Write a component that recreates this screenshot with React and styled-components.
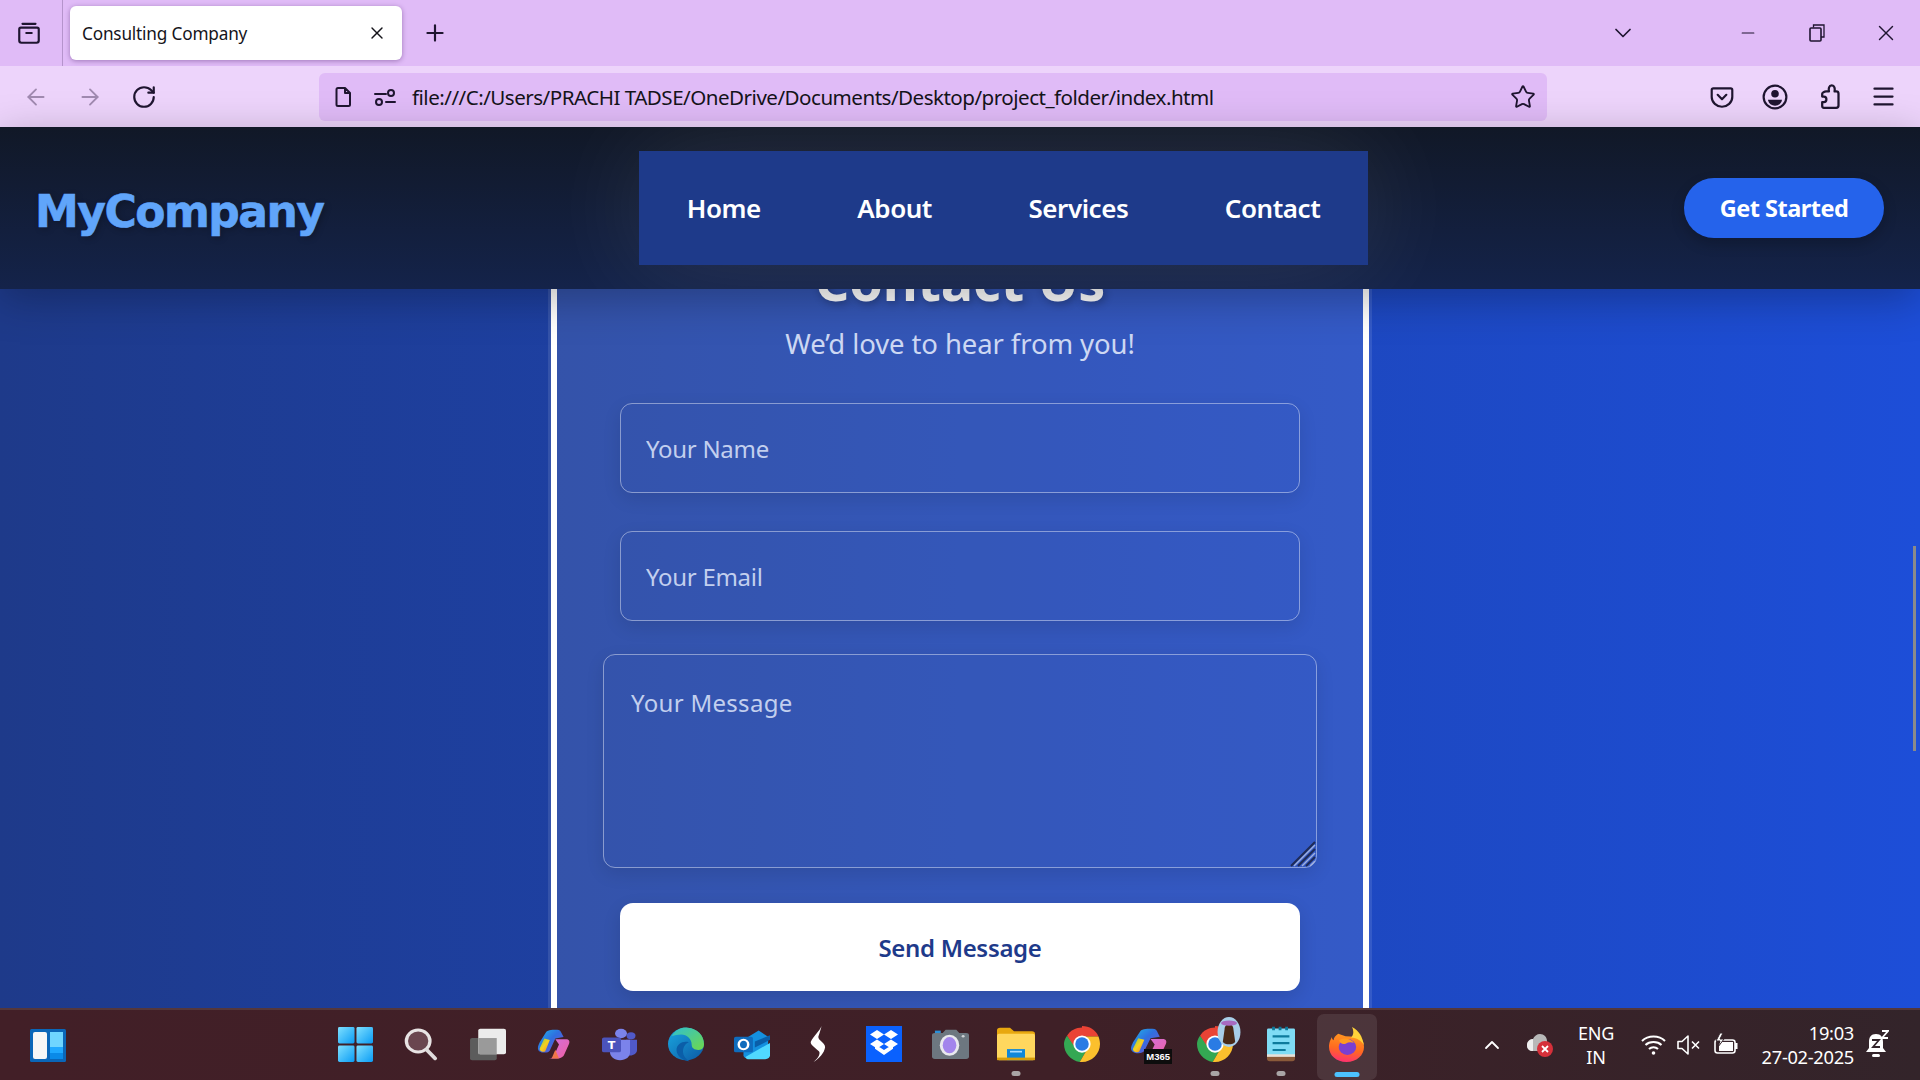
import React from "react";
import styled, { createGlobalStyle } from "styled-components";
import { ArrowLeft, ArrowRight, RotateCw, Star, X, Plus, ChevronDown, ChevronUp, Minus, Menu } from "lucide-react";

const Global = createGlobalStyle`
  html, body { margin: 0; padding: 0; height: 100%; overflow: hidden; }
  * { box-sizing: border-box; }
  body { font-family: "Noto Sans", "Open Sans", sans-serif; }
`;

const Screen = styled.div`
  width: 1920px; height: 1080px; display: flex; flex-direction: column; overflow: hidden; position: relative;
`;
const TabStrip = styled.div`
  height: 66px; background: #e0bbf7; display: flex; align-items: center; color: #1f1530; flex: none;
`;
const TabGroupButton = styled.div`
  width: 63px; height: 66px; border-right: 1px solid #b594cc; display: flex; align-items: center; justify-content: center; padding-right: 4px;
`;
const Tab = styled.div`
  width: 332px; height: 54px; margin-left: 7px; background: #fff; border-radius: 6px; box-shadow: 0 1px 5px rgba(60,20,90,.4);
  display: flex; align-items: center; justify-content: space-between; padding: 0 15px 0 12px; font-size: 17.2px; letter-spacing: -.18px; color: #15141a;
`;
const NewTab = styled.div`
  margin-left: 20px; display: flex; align-items: center;
`;
const Spacer = styled.div` flex: 1; `;
const WindowButtons = styled.div`
  display: flex; align-items: center;
`;
const WindowButton = styled.div`
  width: 69px; height: 66px; display: flex; align-items: center; justify-content: center; flex: none;
  margin-right: ${p => p.$after || 0}px;
`;
const ToolBar = styled.div`
  height: 61px; background: #edd4fb; display: flex; align-items: center; flex: none; color: #1f1530; position: relative;
`;
const NavButtons = styled.div`
  width: 319px; display: flex; align-items: center; gap: 28px; padding-left: 23px;
`;
const UrlBar = styled.div`
  width: 1228px; height: 48px; background: #e0bbf7; border-radius: 6px; display: flex; align-items: center; padding: 0 11px 0 12px;
`;
const PermGap = styled.span` width: 18px; flex: none; `;
const UrlText = styled.div`
  margin-left: 15px; font-size: 20.6px; letter-spacing: -.52px; color: #15141a; flex: 1; white-space: nowrap;
`;
const ToolActions = styled.div`
  flex: 1; display: flex; align-items: center; justify-content: flex-end; gap: 27.5px; padding-right: 23px;
`;
const Viewport = styled.div`
  flex: 1; min-height: 0; display: flex; flex-direction: column; position: relative;
  background: linear-gradient(to right, #1e3a8a, #1d4ed8);
`;
const SiteHeader = styled.header`
  height: 162px; flex: none; display: flex; align-items: center; justify-content: space-between; position: relative; z-index: 2; overflow: hidden;
  padding: 0 36px 0 35px;
  background: linear-gradient(to bottom, #111827, #14234a);
  box-shadow: 0 10px 40px rgba(0,0,0,.27);
`;
const Logo = styled.div`
  font-family: "DejaVu Sans", sans-serif; font-weight: 700; font-size: 44px; letter-spacing: -1.5px; color: #60a5fa; width: 322px; text-shadow: 2px 2px 6px rgba(0,0,0,.25); margin-top: 6px;
  -webkit-text-stroke: .6px #60a5fa;
`;
const Nav = styled.nav`
  width: 729px; height: 114px; background: #1e3a8a; display: flex; align-items: center; justify-content: center; gap: 96.5px; margin-left: 282px;
  box-shadow: 0 0 110px rgba(255,255,255,.1);
`;
const NavLink = styled.a`
  color: #fff; font-size: 26px; font-weight: 600; letter-spacing: -.45px; white-space: nowrap;
`;
const Cta = styled.button`
  width: 200px; height: 60px; border: 0; border-radius: 30px; background: #2563eb; color: #fff; font: 700 23.5px "Noto Sans", sans-serif; letter-spacing: -.5px;
  box-shadow: 0 6px 14px rgba(0,0,0,.2); margin-left: auto; padding: 0;
`;
const Main = styled.main`
  flex: 1; min-height: 0; overflow: hidden; display: flex; justify-content: center; padding-left: 0;
`;
const Card = styled.section`
  width: 818px; height: 900px; margin-top: -72px; flex: none; border: 6px solid #fff; background: rgba(255,255,255,.1); padding-top: 25px;
  box-shadow: 0 0 0 3px rgba(255,255,255,.1); display: flex; flex-direction: column; align-items: center; color: #fff;
`;
const Title = styled.h2`
  margin: 0; font-size: 54px; line-height: 64px; font-weight: 700; letter-spacing: -.2px; text-shadow: 2px 2px 8px rgba(0,0,0,.3);
`;
const Subtitle = styled.p`
  margin: 12px 0 39px; font-size: 27.5px; line-height: 40px; letter-spacing: -.1px; color: #cdd8f3; 
`;
const Input = styled.input`
  width: 680px; height: 90px; flex: none; margin-bottom: ${p => p.$gap}px; border: 1px solid rgba(255,255,255,.42); border-radius: 12px; background: transparent;
  padding: 1px 25px 0; font: 24px "Noto Sans", sans-serif; letter-spacing: -.3px; color: #fff; outline: none; box-shadow: 0 6px 18px rgba(0,0,0,.1);
  &::placeholder { color: #c2cfee; opacity: 1; }
`;
const AreaWrap = styled.div`
  position: relative; width: 714px; height: 214px; flex: none; margin-bottom: 35px;
`;
const TextArea = styled.textarea`
  width: 100%; height: 100%; display: block; resize: none; border: 1px solid rgba(255,255,255,.42); border-radius: 12px; background: transparent;
  padding: 34px 27px; font: 24px/1.15 "Noto Sans", sans-serif; letter-spacing: .3px; color: #fff; outline: none; box-shadow: 0 6px 18px rgba(0,0,0,.1);
  &::placeholder { color: #c2cfee; opacity: 1; }
`;
const Grip = styled.svg`
  position: absolute; right: 1px; bottom: 1px;
`;
const Send = styled.button`
  width: 680px; height: 88px; flex: none; border: 0; border-radius: 13px; background: #fff; color: #1e3a8a; font: 600 24px "Noto Sans", sans-serif; letter-spacing: -.32px; box-shadow: 0 6px 18px rgba(0,0,0,.12); padding: 0;
`;
const Scrollbar = styled.div`
  position: absolute; top: 419px; right: 4px; width: 3px; height: 205px; background: #8a8a8a; z-index: 5;
`;
const Taskbar = styled.footer`
  height: 72px; flex: none; border-top: 2px solid #54373b; display: flex; align-items: center; color: #fff;
  background: linear-gradient(to right, #421f27, #3f2027 55%, #33242a); position: relative; z-index: 3;
`;
const Widgets = styled.div`
  width: 322px; flex: none; padding-left: 30px; display: flex; align-items: center;
`;
const Apps = styled.div` display: flex; align-items: center; flex: none; `;
const AppSlot = styled.div`
  width: 66.13px; height: 70px; display: flex; align-items: center; justify-content: center; position: relative; flex: none;
  ${p => p.$active && `&::before { content: ""; position: absolute; left: 3px; right: 3px; top: 4px; bottom: 0; background: rgba(255,255,255,.09); border-radius: 7px; }`}
  & > svg, & > div { position: relative; margin-bottom: 2px; }
`;
const Dot = styled.span`
  position: absolute; bottom: 4px; left: 50%; transform: translateX(-50%); width: 9px; height: 5px; border-radius: 3px; background: #a9a5a6;
`;
const ActiveDot = styled.span`
  position: absolute; bottom: 3px; left: 50%; transform: translateX(-50%); width: 25px; height: 5px; border-radius: 3px; background: #4cc2ff;
`;
const Tray = styled.div`
  flex: 1; display: flex; align-items: center; padding-left: 100px; 
`;
const ChevronGap = styled.span` width: 22px; flex: none; `;
const Lang = styled.div`
  width: 50px; margin-left: 17px; text-align: center; font-size: 18px; line-height: 24px; letter-spacing: -.2px; 
`;
const TrayGroup = styled.div`
  display: flex; align-items: center; gap: 11px; margin-left: 20px;
`;
const Clock = styled.div`
  margin-left: 21px; width: 94px; flex: none; text-align: right; font-size: 18.3px; line-height: 24px; letter-spacing: -.3px; white-space: nowrap;
`;
const Bell = styled.div` margin-left: 11px; display: flex; `;
const Badged = styled.div` position: relative; display: flex; `;

const Ic = ({ s = 24, children, vb = "0 0 24 24" }) => <svg width={s} height={s} viewBox={vb} fill="none">{children}</svg>;
const App36 = ({ w, h, vb, children }) => <svg width={w} height={h} viewBox={vb} preserveAspectRatio="none">{children}</svg>;

const Archive = () => <Ic s={26}><path d="M6 3.500h12M4.500 7h15c1 0 1.500.6 1.500 1.500v10.500c0 1-.6 2-2 2H5c-1.400 0-2-1-2-2V8.500C3 7.600 3.500 7 4.500 7zM9.500 12h5" stroke="#1f1530" strokeWidth="2" strokeLinecap="round" /></Ic>;
const FileIc = () => <Ic s={24}><path d="M7 3h7l5 5v11.500c0 1-.7 1.500-1.500 1.500h-10.500c-1 0-1.500-.6-1.500-1.500V4.500C5.500 3.600 6 3 7 3zM14 3v5h5" stroke="#1f1530" strokeWidth="2" strokeLinejoin="round" fill="none" /></Ic>;
const Perm = () => <Ic s={24}><path d="M2 9h11M13 17h9" stroke="#1f1530" strokeWidth="2" strokeLinecap="round" /><circle cx="18" cy="8" r="3" stroke="#1f1530" strokeWidth="2" /><circle cx="6" cy="17" r="3" stroke="#1f1530" strokeWidth="2" /></Ic>;
const Pocket = () => <Ic s={26}><path d="M4 4h16c1 0 1.500.6 1.500 1.500V12c0 5-4.500 9-9.500 9s-9.500-4-9.500-9V5.500C2.500 4.600 3 4 4 4z" stroke="#1f1530" strokeWidth="2" /><path d="M8 10l4 4 4-4" stroke="#1f1530" strokeWidth="2" strokeLinecap="round" strokeLinejoin="round" /></Ic>;
const Account = () => <Ic s={26}><circle cx="12" cy="12" r="10.500" stroke="#1f1530" strokeWidth="2" /><circle cx="12" cy="9" r="3.500" fill="#1f1530" /><path d="M5.500 14.500h13c-.5 3.500-3.500 5.500-6.500 5.500s-6-2-6.500-5.500z" fill="#1f1530" /></Ic>;
const Jigsaw = () => <Ic s={27}><path d="M9 7.500h2.500C11 5 11.500 2 14 2c2.500 0 3 3 2.500 5.500H18c1 0 2 .8 2 2V20c0 1-.8 2-2 2H7c-1 0-1.500-.7-1.500-1.500V17H7c3 0 3-5 0-5H5.500V9.500C5.500 8.500 7.500 7.500 9 7.500z" stroke="#1f1530" strokeWidth="2" strokeLinejoin="round" /></Ic>;
const Restore = () => <svg width="16" height="18" viewBox="0 0 16 18" fill="none"><path d="M4.500 3.500V1h10.500v12h-3" stroke="#1f1530" strokeWidth="1.300" /><rect x="1" y="4" width="11" height="13" rx="1" stroke="#1f1530" strokeWidth="1.600" /></svg>;

const StartI = () => <svg width="35" height="35" viewBox="0 0 36 36"><defs><linearGradient id="w" x1="0" y1="0" x2="1" y2="1"><stop offset="0" stopColor="#7fe0ff" /><stop offset="1" stopColor="#0a9cf5" /></linearGradient></defs><rect x="0" y="0" width="17" height="17" rx="1.500" fill="url(#w)" /><rect x="19" y="0" width="17" height="17" rx="1.500" fill="url(#w)" /><rect x="0" y="19" width="17" height="17" rx="1.500" fill="url(#w)" /><rect x="19" y="19" width="17" height="17" rx="1.500" fill="url(#w)" /></svg>;
const SearchI = () => <App36 w={34} h={35} vb="0 0 36 40"><circle cx="15" cy="16" r="12.500" fill="#6a464f" stroke="#e8e4e4" strokeWidth="3.500" /><path d="M24 26l9 10" stroke="#e0dcdc" strokeWidth="4" strokeLinecap="round" /></App36>;
const TaskViewI = () => <App36 w={37} h={34} vb="0 0 36 40"><rect x="1" y="13" width="26" height="26" rx="2" fill="#5c5c5c" /><rect x="9" y="2" width="27" height="30" rx="2" fill="#ececec" /><rect x="9" y="13" width="18" height="19" fill="#9a9a9a" /></App36>;
const Copilot = ({ m, w = 33, h = 31 }) => {
  const k = m ? "m" : "d";
  return <App36 w={w} h={h} vb="0 0 36 42"><defs><linearGradient id={`c1${k}`} x1="0" y1="0" x2="1" y2="1"><stop offset="0" stopColor="#1fb6e8" /><stop offset=".45" stopColor="#2f6fe0" /><stop offset="1" stopColor="#7b4fd0" /></linearGradient><linearGradient id={`c2${k}`} x1="0" y1="0" x2="1" y2="1"><stop offset="0" stopColor="#7fd04a" /><stop offset=".5" stopColor="#f5d020" /><stop offset="1" stopColor="#f08030" /></linearGradient><linearGradient id={`c3${k}`} x1="0" y1="0" x2="1" y2="1"><stop offset="0" stopColor="#d070e0" /><stop offset="1" stopColor="#f060a0" /></linearGradient></defs><path d="M10 4c2-3 8-3 12-3 3 0 4 2 5 5l2 5-9 2-6 16c-1 2-3 3-6 3-4 0-7-2-7-6 0-3 1-5 2-8z" fill={`url(#c1${k})`} /><path d="M3 26l5-13 6 2-5 15c-2 2-7 0-6-4z" fill={`url(#c2${k})`} /><path d="M20 14h12c3 0 4 3 3 6l-5 14c-1 4-4 6-8 6h-9c3 0 5-2 6-5l5-14z" fill={`url(#c3${k})`} /><path d="M16 40l4-12 4 12z" fill="#f0764a" /></App36>;
};
const TeamsI = () => <App36 w={36} h={33} vb="0 0 36 42"><circle cx="19" cy="7" r="6" fill="#7b83eb" /><circle cx="29" cy="10" r="4.500" fill="#5059c9" /><path d="M24 15h11v13c0 4-3 7-7 7-2 0-3-.5-4-1z" fill="#5059c9" /><path d="M8 15h20v16c0 6-4 10-10 10S8 36 8 31z" fill="#7b83eb" /><rect x="0" y="12" width="19" height="19" rx="2" fill="#4b53bc" /><text x="9.500" y="26.500" textAnchor="middle" fontFamily="Noto Sans" fontWeight="700" fontSize="14" fill="#fff">T</text></App36>;
const EdgeI = () => <App36 w={36} h={36} vb="0 0 38 42"><defs><linearGradient id="e1" x1="0" y1="0" x2="1" y2="1"><stop offset="0" stopColor="#1aa7e0" /><stop offset="1" stopColor="#0c59a4" /></linearGradient><linearGradient id="e2" x1="0" y1="0" x2="1" y2="1"><stop offset="0" stopColor="#30c0d0" /><stop offset="1" stopColor="#6fd84a" /></linearGradient></defs><circle cx="19" cy="21" r="19" fill="url(#e1)" /><path d="M4 12C8 3 16 1 21 2c10 1 17 9 17 19 0 3-1 7-6 7-4 0-7-2-7-6 0-7-5-12-11-12-4 0-7 1-10 2z" fill="url(#e2)" /><path d="M22 19c-6-2-13 2-13 9 0 7 7 13 14 13-5-3-8-8-7-14 1-4 3-7 6-8z" fill="#0b5ea8" /></App36>;
const OutlookI = () => <App36 w={36} h={31} vb="0 0 38 40"><path d="M10 14l16-12 10 8v24c0 2-1 4-4 4H14c-2 0-4-2-4-4z" fill="#1490df" /><path d="M12 36l26-18v16c0 3-2 5-5 5H16c-2 0-4-1-4-3z" fill="#50d9ff" /><path d="M22 16l16-8v6L22 24z" fill="#0a5ea8" /><rect x="0" y="10" width="20" height="20" rx="2" fill="#0f6cbd" /><ellipse cx="10" cy="20" rx="5" ry="6" fill="none" stroke="#fff" strokeWidth="2.600" /></App36>;
const SwiftI = () => <App36 w={16} h={36} vb="0 0 18 44"><path d="M13 0C11 6 4 12 1 19c-1 3 2 5 6 9l3 3c2 2 0 8-6 13 7-5 12-11 13-18 0-3-2-5-5-8-3-2-3-5-2-7 1-3 2-7 3-11z" fill="#fff" /></App36>;
const DropboxI = () => <App36 w={36} h={36} vb="0 0 36 36"><rect width="36" height="36" fill="#0a61fe" /><path d="M11 4l7 4.500-7 4.500-7-4.500zM25 4l7 4.500-7 4.500-7-4.500zM11 13.500l7 4.500-7 4.500-7-4.500zM25 13.500l7 4.500-7 4.500-7-4.500zM18 24l7-4.500 2 1.300v2L18 29l-9-6.200v-2l2-1.300z" fill="#fff" /></App36>;
const CameraI = () => <App36 w={37} h={30} vb="0 0 38 37"><path d="M3 5h8l3-4h11l3 4h7c2 0 3 1 3 3v26c0 2-1 3-3 3H3c-2 0-3-1-3-3V8c0-2 1-3 3-3z" fill="#6d7780" /><rect x="3" y="2" width="6" height="3" fill="#2a90d8" /><ellipse cx="18" cy="20" rx="10" ry="13" fill="#e9e9ee" /><ellipse cx="18" cy="20" rx="7" ry="10" fill="#a385ec" /><circle cx="32" cy="9" r="1.500" fill="#cfd3d6" /></App36>;
const ExplorerI = () => <App36 w={38} h={34} vb="0 0 38 40"><path d="M0 4c0-2 1-3 3-3h10l4 4h18c2 0 3 1 3 3v8H0z" fill="#e8a80f" /><rect y="8" width="38" height="31" rx="2" fill="#ffd75e" /><path d="M10 26h18v13H10z" fill="#0f87d8" /><rect x="13" y="28" width="12" height="2" fill="#a8dcff" /><rect y="36" width="38" height="3" fill="#d89e0a" /></App36>;
const ChromeI = () => <App36 w={36} h={36} vb="0 0 48 48"><path d="M24 2C16 2 8 6 4 13l11 19 9-8z" fill="#ea4335" /><path d="M24 0c10 0 18 5 22 14H24z" fill="#ea4335" /><path d="M4 13C1 17 0 21 0 24c0 12 9 22 21 24l11-19H15z" fill="#34a853" /><path d="M24 14h22c1 3 2 6 2 10 0 13-11 24-24 24h-3l11-19z" fill="#fbc02d" /><circle cx="24" cy="24" r="11.500" fill="#fff" /><circle cx="24" cy="24" r="9" fill="#2a7be4" /></App36>;
const M365Tag = styled.span`
  position: absolute; bottom: -3px; right: -5px; background: #0d0d0d; color: #fff; font: 700 9.5px "Liberation Sans", sans-serif; padding: 2px 2px; line-height: 11px;
`;
const ProfileBadge = styled.svg`
  position: absolute; top: -9px; right: -9px;
`;
const NotepadI = () => <App36 w={28} h={36} vb="0 0 30 42"><rect y="3" width="30" height="34" rx="1.500" fill="#7fdcf5" /><path d="M0 34h30v4c0 2-1 3-3 3H3c-2 0-3-1-3-3z" fill="#8a5a3a" /><rect y="33" width="30" height="3" fill="#e8e0d8" /><path d="M7 1v4M14 1v4M21 1v4" stroke="#0d7a9c" strokeWidth="3" /><path d="M6 12h18M6 20h18M6 28h14" stroke="#0d7a9c" strokeWidth="2.600" /></App36>;
const FirefoxI = () => <App36 w={35} h={35} vb="0 0 38 42"><defs><linearGradient id="f1" x1=".6" y1="0" x2=".4" y2="1"><stop offset="0" stopColor="#ff9a20" /><stop offset=".55" stopColor="#ff6a20" /><stop offset="1" stopColor="#ff3070" /></linearGradient></defs><path d="M3 12c0 2 1 3 2 4 0-3 2-6 5-8l8 3 16 1c3 4 4 9 4 12 0 10-8 18-19 18S0 34 0 24c0-6 2-9 3-12z" fill="url(#f1)" /><path d="M25 0c8 5 11 11 13 22-3-6-8-9-14-9 3-4 3-8 1-13z" fill="#ffd23a" /><circle cx="20" cy="24" r="9.500" fill="#7b3fd0" /><path d="M11 16c5-4 13-2 16 3-3-1-6-1-9 1-3 1-6 0-7-4z" fill="#ff9a20" /></App36>;
const CloudErr = () => <svg width="28" height="28" viewBox="0 0 28 28"><path d="M8 20c-4 0-7-2-7-6s3-6 6-6c1-3 4-5 7-5 4 0 7 3 7 7v10z" fill="#b8b8b8" /><path d="M1 14c0-3 3-6 6-6v12c-4 0-6-2-6-6z" fill="#eee" /><circle cx="19" cy="18" r="8" fill="#d6303a" /><path d="M16 15l6 6M22 15l-6 6" stroke="#fff" strokeWidth="1.800" /></svg>;
const Wifi = () => <svg width="25" height="24" viewBox="0 0 25 24" fill="none" stroke="#fff" strokeWidth="2"><path d="M1 8c6-6 17-6 23 0M4.500 12c4-4 12-4 16 0M8 16c2.500-2.500 6.500-2.500 9 0" /><circle cx="12.500" cy="20" r="1.800" fill="#fff" stroke="none" /></svg>;
const Speaker = () => <svg width="25" height="24" viewBox="0 0 25 24" fill="none" stroke="#fff" strokeWidth="1.600"><path d="M1 8.500h4l6-5.500v18l-6-5.500H1z" strokeLinejoin="round" /><path d="M15 8.500l7 7M22 8.500l-7 7" /></svg>;
const Battery = () => <svg width="26" height="26" viewBox="0 0 26 26" fill="none"><rect x="2" y="8" width="20" height="13" rx="2.500" stroke="#fff" strokeWidth="1.600" /><rect x="6" y="10" width="14" height="9" fill="#fff" /><rect x="22" y="11" width="2.500" height="6" fill="#fff" /><path d="M7 1L3 9h4l-2 6 6-8H7l3-6z" fill="#fff" stroke="#33242a" /></svg>;
const BellZ = () => <svg width="24" height="30" viewBox="0 0 24 30"><path d="M11 4c5 0 7 3 7 8v6l3 4H1l3-4v-6c0-5 2-8 7-8z" fill="#fff" /><rect x="7" y="24" width="8" height="3" rx="1.500" fill="#fff" /><path d="M7 10h7l-6 7h7" stroke="#33242a" strokeWidth="1.800" fill="none" /><path d="M17 1h6l-6 7h6" stroke="#fff" strokeWidth="1.800" fill="none" /></svg>;
const Snap = () => <svg width="36" height="33" viewBox="0 0 36 33"><rect width="36" height="33" rx="1.500" fill="#0a66b8" /><rect x="3" y="3" width="14" height="27" rx="2" fill="#f6f6f6" /><rect x="20" y="3" width="13" height="15" fill="#6fd5ff" /><rect x="20" y="18" width="13" height="6" fill="#1fa8ff" /><rect x="20" y="24" width="13" height="6" fill="#0a8ae8" /></svg>;

export default function App() {
  return (
    <Screen>
      <Global />
      <TabStrip>
        <TabGroupButton><Archive /></TabGroupButton>
        <Tab>Consulting Company<X size={20} strokeWidth={1.7} /></Tab>
        <NewTab><Plus size={26} strokeWidth={2} /></NewTab>
        <Spacer />
        <WindowButtons>
          <WindowButton $after={56}><ChevronDown size={28} strokeWidth={1.5} /></WindowButton>
          <WindowButton><Minus size={20} strokeWidth={1.3} /></WindowButton>
          <WindowButton><Restore /></WindowButton>
          <WindowButton><X size={26} strokeWidth={1.3} /></WindowButton>
        </WindowButtons>
      </TabStrip>
      <ToolBar>
        <NavButtons>
          <ArrowLeft size={26} strokeWidth={1.7} color="#a08ab0" />
          <ArrowRight size={26} strokeWidth={1.7} color="#a08ab0" />
          <RotateCw size={26} strokeWidth={2} />
        </NavButtons>
        <UrlBar>
          <FileIc />
          <PermGap />
          <Perm />
          <UrlText>file:///C:/Users/PRACHI TADSE/OneDrive/Documents/Desktop/project_folder/index.html</UrlText>
          <Star size={26} strokeWidth={1.7} />
        </UrlBar>
        <ToolActions>
          <Pocket />
          <Account />
          <Jigsaw />
          <Menu size={27} strokeWidth={2} />
        </ToolActions>
      </ToolBar>
      <Viewport>
        <Scrollbar />
        <SiteHeader>
          <Logo>MyCompany</Logo>
          <Nav>
            <NavLink>Home</NavLink>
            <NavLink>About</NavLink>
            <NavLink>Services</NavLink>
            <NavLink>Contact</NavLink>
          </Nav>
          <Cta>Get Started</Cta>
        </SiteHeader>
        <Main>
          <Card>
            <Title>Contact Us</Title>
            <Subtitle>We’d love to hear from you!</Subtitle>
            <Input $gap={38} placeholder="Your Name" />
            <Input $gap={33} placeholder="Your Email" />
            <AreaWrap>
              <TextArea placeholder="Your Message" />
              <Grip width="26" height="26" viewBox="0 0 26 26" fill="none">
                <path d="M1 25L25 1" stroke="#1e2a55" strokeWidth="2" />
                <path d="M4 25L25 4" stroke="#9fb0de" strokeWidth="1.500" />
                <path d="M8 25L25 8" stroke="#1e2a55" strokeWidth="2" />
                <path d="M12 25L25 12" stroke="#9fb0de" strokeWidth="1.500" />
                <path d="M16 25L25 16" stroke="#1e2a55" strokeWidth="2" />
                <path d="M20 25L25 20" stroke="#9fb0de" strokeWidth="1.500" />
              </Grip>
            </AreaWrap>
            <Send>Send Message</Send>
          </Card>
        </Main>
      </Viewport>
      <Taskbar>
        <Widgets><Snap /></Widgets>
        <Apps>
          <AppSlot><StartI /></AppSlot>
          <AppSlot><SearchI /></AppSlot>
          <AppSlot><TaskViewI /></AppSlot>
          <AppSlot><Copilot /></AppSlot>
          <AppSlot><TeamsI /></AppSlot>
          <AppSlot><EdgeI /></AppSlot>
          <AppSlot><OutlookI /></AppSlot>
          <AppSlot><SwiftI /></AppSlot>
          <AppSlot><DropboxI /></AppSlot>
          <AppSlot><CameraI /></AppSlot>
          <AppSlot><ExplorerI /><Dot /></AppSlot>
          <AppSlot><ChromeI /></AppSlot>
          <AppSlot><Badged><Copilot m w={37} h={33} /><M365Tag>M365</M365Tag></Badged></AppSlot>
          <AppSlot>
            <Badged>
              <ChromeI />
              <ProfileBadge viewBox="0 0 26 34" width="26" height="30"><ellipse cx="13" cy="17" rx="13" ry="17" fill="#a8cfe8" /><path d="M8 14c0-4 3-6 5-6s5 2 5 6l2 14c-2 4-12 4-14 0z" fill="#4a2a18" /><ellipse cx="13" cy="7" rx="9" ry="3" fill="#a86ac0" /></ProfileBadge>
            </Badged>
            <Dot />
          </AppSlot>
          <AppSlot><NotepadI /><Dot /></AppSlot>
          <AppSlot $active><FirefoxI /><ActiveDot /></AppSlot>
        </Apps>
        <Tray>
          <ChevronUp size={24} strokeWidth={1.8} />
          <ChevronGap />
          <CloudErr />
          <Lang>ENG<br />IN</Lang>
          <TrayGroup><Wifi /><Speaker /><Battery /></TrayGroup>
          <Clock>19:03<br />27-02-2025</Clock>
          <Bell><BellZ /></Bell>
        </Tray>
      </Taskbar>
    </Screen>
  );
}
